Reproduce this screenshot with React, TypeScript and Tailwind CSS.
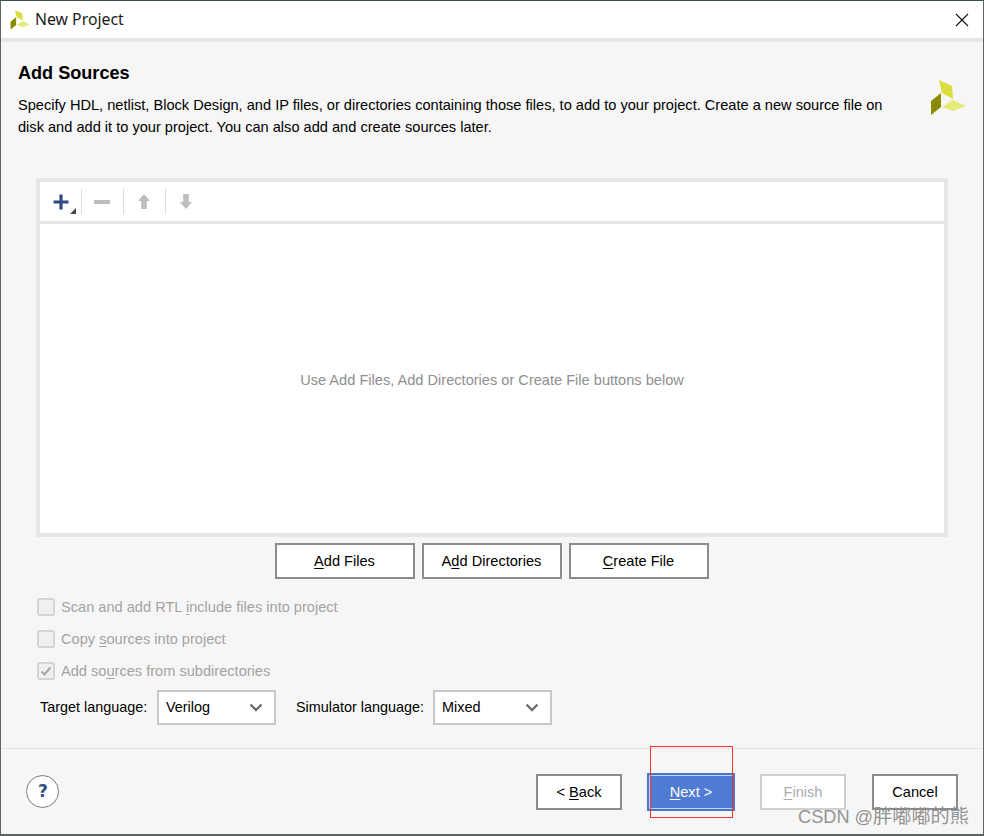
import React from "react";

const Logo = ({ size }: { size: number }) => (
  <svg width={size} height={size} viewBox="0 0 36 36" className="block">
    <polygon points="9,0 22,6 23,19 12,13" fill="#dcdc3c" />
    <polygon points="11,13 11,27 1,35 1,21" fill="#8a8a00" />
    <polygon points="12,27 23,20 36,26 23,31" fill="#e6ea78" />
  </svg>
);

const U = ({ children }: { children: React.ReactNode }) => <span className="underline underline-offset-2">{children}</span>;

const ToolSep = () => <div className="w-px h-[25px] bg-[#dcdcdc]" />;

const Btn = ({ children }: { children: React.ReactNode }) => (
  <button className="w-[140px] h-[36px] pt-[2px] bg-white border-2 border-[#8c8c8c] text-[14.6px] text-black">{children}</button>
);

const Check = ({ checked, children }: { checked?: boolean; children: React.ReactNode }) => (
  <div className="flex items-center h-[32px] text-[14.6px] text-[#a3a3a3]">
    <div className="w-[18px] h-[18px] rounded-[3px] border-2 border-[#d4d4d4] bg-[#f0f0f0] flex items-center justify-center">
      {checked && (
        <svg width="12" height="12" viewBox="0 0 12 12">
          <path d="M1.5 6.5 L4.5 9.5 L10.5 2.5" fill="none" stroke="#a8a8a8" strokeWidth="2.2" />
        </svg>
      )}
    </div>
    <span className="ml-[6px] pt-[2px]">{children}</span>
  </div>
);

const Select = ({ value }: { value: string }) => (
  <div className="w-[119px] h-[35px] bg-white border-2 border-[#c8c8c8] flex items-center justify-between pl-[7px] pr-[11px] text-[14.4px] text-black">
    <span>{value}</span>
    <svg width="14" height="9" viewBox="0 0 14 9">
      <path d="M1.5 1.5 L7 7 L12.5 1.5" fill="none" stroke="#6e6e6e" strokeWidth="2.4" />
    </svg>
  </div>
);

export default function App() {
  return (
    <div className="relative w-[984px] h-[836px] overflow-hidden bg-[#f6f6f6] border-t border-l border-r border-t-[#3f4f4f] border-l-[#5f6464] border-r-[#5f6464] border-b-2 border-b-[#5f6464] flex flex-col text-black font-['Liberation_Sans',Arial,sans-serif]">
      <div className="h-[37px] shrink-0 bg-white flex items-center pl-[9px] pr-[14px]">
        <Logo size={20} />
        <span className="ml-[5px] text-[15.8px] font-['Noto_Sans',sans-serif] text-[#1a1a1a]">New Project</span>
        <svg className="ml-auto" width="14" height="14" viewBox="0 0 14 14">
          <path d="M1 1 L13 13 M13 1 L1 13" stroke="#111" strokeWidth="1.1" />
        </svg>
      </div>
      <div className="h-[4px] shrink-0 bg-[#e6e6e6]" />

      <div className="flex px-[17px] pt-[20px] h-[136px] shrink-0">
        <div className="w-[880px]">
          <h1 className="text-[18.1px] leading-[22px] font-bold">Add Sources</h1>
          <p className="mt-[10px] text-[14.6px] leading-[22px] text-black">
            Specify HDL, netlist, Block Design, and IP files, or directories containing those files, to add to your project. Create a new source file on disk and add it to your project. You can also add and create sources later.
          </p>
        </div>
        <div className="ml-[35px] mt-[18px]">
          <Logo size={36} />
        </div>
      </div>

      <div className="mx-[35px] h-[359px] shrink-0 border-4 border-[#e6e6e6] bg-[#e6e6e6] flex flex-col gap-[3px]">
        <div className="h-[39px] shrink-0 bg-white flex items-center pl-[11px]">
          <div className="relative w-[30px] h-[25px] flex items-center">
            <svg width="16" height="16" viewBox="0 0 16 16" className="ml-[2px]">
              <path d="M8 0.5 V15.5 M0.5 8 H15.5" stroke="#2f4b80" strokeWidth="3.2" />
            </svg>
            <svg width="6" height="6" viewBox="0 0 6 6" className="absolute left-[19px] bottom-0">
              <polygon points="6,0 6,6 0,6" fill="#444" />
            </svg>
          </div>
          <ToolSep />
          <div className="w-[41px] flex justify-center pr-[1px]">
            <div className="w-[16px] h-[4px] bg-[#bdbdbd]" />
          </div>
          <ToolSep />
          <div className="w-[41px] flex justify-center pr-[1px]">
            <svg width="12" height="15" viewBox="0 0 12 15">
              <path d="M6 0 L12 7 H8.8 V15 H3.2 V7 H0 Z" fill="#bdbdbd" />
            </svg>
          </div>
          <ToolSep />
          <div className="w-[41px] flex justify-center pr-[1px]">
            <svg width="12" height="15" viewBox="0 0 12 15">
              <path d="M6 15 L12 8 H8.8 V0 H3.2 V8 H0 Z" fill="#bdbdbd" />
            </svg>
          </div>
        </div>
        <div className="flex-1 bg-white flex items-center justify-center pt-[4px] text-[14.6px] text-[#8f8f8f]">
          Use Add Files, Add Directories or Create File buttons below
        </div>
      </div>

      <div className="flex justify-center gap-[7px] mt-[6px] shrink-0 pr-[1px]">
        <Btn><U>A</U>dd Files</Btn>
        <Btn>A<U>d</U>d Directories</Btn>
        <Btn><U>C</U>reate File</Btn>
      </div>

      <div className="ml-[36px] mt-[12px] shrink-0">
        <Check>Scan and add RTL <U>i</U>nclude files into project</Check>
        <Check>Copy <U>s</U>ources into project</Check>
        <Check checked>Add so<U>u</U>rces from subdirectories</Check>
      </div>

      <div className="ml-[39px] mt-[3px] flex items-center text-[14.4px] shrink-0">
        <span className="w-[108px] whitespace-nowrap">Target language:</span>
        <div className="ml-[9px]"><Select value="Verilog" /></div>
        <span className="ml-[20px] w-[128px] whitespace-nowrap">Simulator language:</span>
        <div className="ml-[9px]"><Select value="Mixed" /></div>
      </div>

      <div className="mt-[23px] flex-1 border-t border-[#e4e4e4] flex items-center pl-[25px] pr-[25px]">
        <div className="w-[33px] h-[33px] rounded-full border border-[#7a7a7a] bg-white flex items-center justify-center pl-[1px] text-[17px] font-bold text-[#2f4b80] font-['DejaVu_Sans',sans-serif]">?</div>
        <div className="ml-auto flex items-center">
          <button className="w-[86px] h-[36px] pt-[2px] bg-white border-2 border-[#8c8c8c] text-[14.6px]">&lt; <U>B</U>ack</button>
          <button className="ml-[25px] w-[88px] h-[38px] pt-[2px] bg-[#4f7cd2] border-2 border-[#4a76cc] outline outline-1 -outline-offset-3 outline-[#c3d2ee] text-[14.6px] text-white"><U>N</U>ext &gt;</button>
          <button className="ml-[25px] w-[86px] h-[36px] pt-[2px] bg-white border-2 border-[#cfcfcf] text-[14.6px] text-[#ababab]"><U>F</U>inish</button>
          <button className="ml-[26px] w-[86px] h-[36px] pt-[2px] bg-white border-2 border-[#8c8c8c] text-[14.6px]">Cancel</button>
        </div>
      </div>

      <div className="absolute left-[649px] top-[745px] w-[83px] h-[72px] border border-[#ff3030]" />
      <div className="absolute left-[797px] top-[804px] whitespace-nowrap text-[18.2px] leading-[24px] text-[#8a8a8a] opacity-90 font-['Liberation_Sans','Noto_Sans_CJK_SC',sans-serif]">CSDN @<span className="text-[19.2px]">胖嘟嘟的熊</span></div>
    </div>
  );
}
